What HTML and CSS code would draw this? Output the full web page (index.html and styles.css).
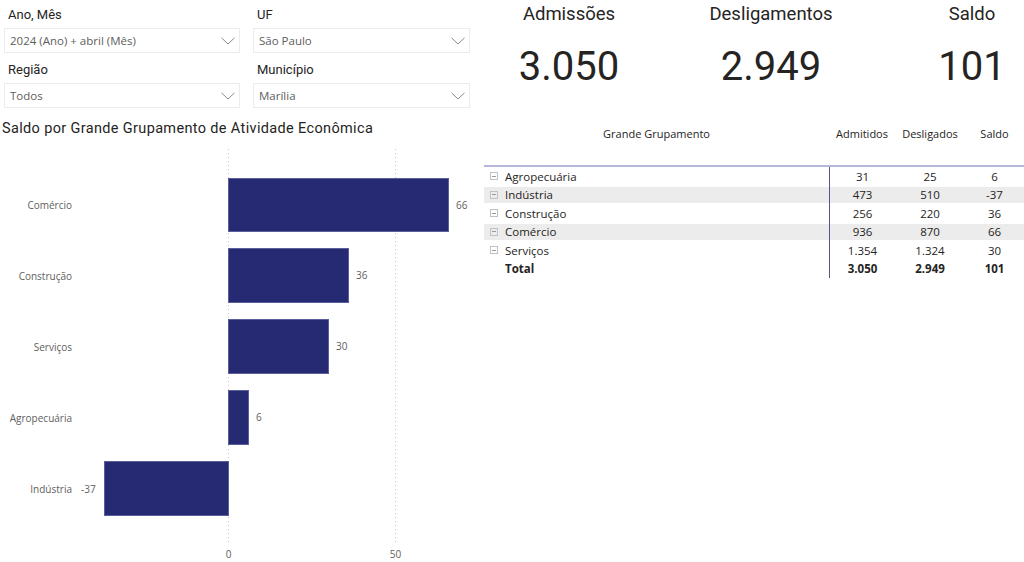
FILE: index.html
```html
<!DOCTYPE html>
<html lang="pt-BR">
<head>
<meta charset="utf-8">
<title>Saldo CAGED</title>
<link rel="stylesheet" href="styles.css">
</head>
<body>
<div class="page">
  <section class="left">
    <div class="filters">
      <div class="filter">
        <div class="flabel">Ano, Mês</div>
        <div class="dropdown"><span>2024 (Ano) + abril (Mês)</span>
          <svg class="chev" width="14" height="8" viewBox="0 0 14 8"><path d="M0.5 0.8 L7 7 L13.5 0.8" fill="none" stroke="#8a8a8a" stroke-width="1"/></svg></div>
      </div>
      <div class="filter">
        <div class="flabel">UF</div>
        <div class="dropdown"><span>São Paulo</span>
          <svg class="chev" width="14" height="8" viewBox="0 0 14 8"><path d="M0.5 0.8 L7 7 L13.5 0.8" fill="none" stroke="#8a8a8a" stroke-width="1"/></svg></div>
      </div>
      <div class="filter">
        <div class="flabel">Região</div>
        <div class="dropdown"><span>Todos</span>
          <svg class="chev" width="14" height="8" viewBox="0 0 14 8"><path d="M0.5 0.8 L7 7 L13.5 0.8" fill="none" stroke="#8a8a8a" stroke-width="1"/></svg></div>
      </div>
      <div class="filter">
        <div class="flabel">Município</div>
        <div class="dropdown"><span>Marília</span>
          <svg class="chev" width="14" height="8" viewBox="0 0 14 8"><path d="M0.5 0.8 L7 7 L13.5 0.8" fill="none" stroke="#8a8a8a" stroke-width="1"/></svg></div>
      </div>
    </div>
    <h2 class="ctitle">Saldo por Grande Grupamento de Atividade Econômica</h2>
    <svg class="chart" width="480" height="430" viewBox="0 132 480 430">
      <g class="grid">
        <line x1="228.5" y1="150" x2="228.5" y2="545"/>
        <line x1="395.5" y1="150" x2="395.5" y2="545"/>
      </g>
      <g class="bars">
        <rect x="228.5" y="179.5" width="220" height="53"/>
        <rect x="228.5" y="249.5" width="120" height="54"/>
        <rect x="228.5" y="320.5" width="100" height="54"/>
        <rect x="228.5" y="391.5" width="20" height="54"/>
        <rect x="104.5" y="462.5" width="124" height="54"/>
      </g>
      <g class="cat">
        <text x="72" y="210">Comércio</text>
        <text x="72" y="281">Construção</text>
        <text x="72" y="352">Serviços</text>
        <text x="72" y="423">Agropecuária</text>
        <text x="72" y="494">Indústria</text>
      </g>
      <g class="val">
        <text x="456" y="210">66</text>
        <text x="356" y="280">36</text>
        <text x="336" y="351">30</text>
        <text x="256" y="422">6</text>
        <text x="81" y="494">-37</text>
      </g>
      <g class="axis">
        <text x="228.5" y="559">0</text>
        <text x="395.5" y="559">50</text>
      </g>
    </svg>
  </section>
  <section class="right">
    <div class="kpis">
      <div class="kpi k1"><div class="klabel">Admissões</div><div class="kval">3.050</div></div>
      <div class="kpi k2"><div class="klabel">Desligamentos</div><div class="kval">2.949</div></div>
      <div class="kpi k3"><div class="klabel">Saldo</div><div class="kval">101</div></div>
    </div>
    <div class="table">
      <div class="thead">
        <div class="c-name">Grande Grupamento</div>
        <div class="c-num c-a">Admitidos</div>
        <div class="c-num c-d">Desligados</div>
        <div class="c-num c-s">Saldo</div>
      </div>
      <div class="tbody">
        <div class="row"><div class="c-name"><span class="exp"></span>Agropecuária</div><div class="c-num c-a">31</div><div class="c-num c-d">25</div><div class="c-num c-s">6</div></div>
        <div class="row alt"><div class="c-name"><span class="exp"></span>Indústria</div><div class="c-num c-a">473</div><div class="c-num c-d">510</div><div class="c-num c-s">-37</div></div>
        <div class="row"><div class="c-name"><span class="exp"></span>Construção</div><div class="c-num c-a">256</div><div class="c-num c-d">220</div><div class="c-num c-s">36</div></div>
        <div class="row alt"><div class="c-name"><span class="exp"></span>Comércio</div><div class="c-num c-a">936</div><div class="c-num c-d">870</div><div class="c-num c-s">66</div></div>
        <div class="row"><div class="c-name"><span class="exp"></span>Serviços</div><div class="c-num c-a">1.354</div><div class="c-num c-d">1.324</div><div class="c-num c-s">30</div></div>
        <div class="row total"><div class="c-name"><span class="noexp"></span>Total</div><div class="c-num c-a">3.050</div><div class="c-num c-d">2.949</div><div class="c-num c-s">101</div></div>
      </div>
    </div>
  </section>
</div>
</body>
</html>
```

FILE: styles.css
```css
* { box-sizing: border-box; }
html, body { margin: 0; padding: 0; background: #ffffff; }
body {
  width: 1024px;
  height: 562px;
  overflow: hidden;
  font-family: "Open Sans", "Noto Sans", sans-serif;
  color: #252423;
}
.page {
  display: grid;
  grid-template-columns: 484px 540px;
  height: 562px;
}
.left { display: flex; flex-direction: column; }
.filters {
  display: grid;
  grid-template-columns: 236px 217px;
  column-gap: 13px;
  row-gap: 8px;
  padding: 6px 0 0 4px;
}
.flabel {
  font-family: Roboto, "DejaVu Sans", sans-serif;
  font-size: 13px;
  line-height: 18px;
  height: 18px;
  padding-left: 4px;
  color: #252423;
}
.dropdown {
  margin-top: 4px;
  height: 25px;
  border: 1px solid #ececec;
  display: flex;
  align-items: center;
  justify-content: space-between;
  padding: 0 4px 0 5px;
  font-size: 11.5px;
  color: #605e5c;
}
.chev { display: block; margin-top: 1px; }
.ctitle {
  margin: 12px 0 0 2px;
  font-family: Roboto, "DejaVu Sans", sans-serif;
  font-weight: 400;
  font-size: 14.5px;
  letter-spacing: 0.35px;
  line-height: 18px;
  color: #252423;
}
.chart { display: block; margin-top: -7px; }
.grid line { stroke: #c8c8c8; stroke-width: 1; stroke-dasharray: 1 3; }
.bars rect { fill: #262a73; stroke: #5a5e9c; stroke-width: 1; }
.cat text { font-size: 10px; fill: #605e5c; text-anchor: end; font-family: "Open Sans", sans-serif; }
.val text { font-size: 10px; fill: #605e5c; font-family: "Open Sans", sans-serif; }
.axis text { font-size: 10px; fill: #605e5c; text-anchor: middle; font-family: "Open Sans", sans-serif; }

.kpis {
  display: grid;
  grid-template-columns: 170px 234px 136px;
}
.k3 { padding-left: 32px; }
.kpi { text-align: center; font-family: Roboto, "DejaVu Sans", sans-serif; color: #252423; }
.klabel { font-size: 18.5px; line-height: 22px; margin-top: 3px; }
.kval { font-size: 40px; line-height: 48px; margin-top: 18px; }

.table { margin-top: 26px; }
.thead {
  display: grid;
  grid-template-columns: 345px 66px 70px 59px;
  font-size: 11px;
  color: #252423;
  height: 50px;
  padding-top: 9px;
  line-height: 16px;
  border-bottom: 2px solid #b6b6d8;
}
.thead .c-num { text-align: center; }
.thead .c-name { text-align: center; }
.tbody { display: flex; flex-direction: column; }
.row {
  display: grid;
  grid-template-columns: 345px 66px 70px 59px;
  height: 18.5px;
  padding: 1.5px 0;
  background-clip: content-box;
  font-size: 11.5px;
  line-height: 15.5px;
  color: #252423;
}
.row.alt { background-color: #ececec; }
.row .c-name { display: flex; align-items: center; padding-left: 6px; }
.row .c-num { text-align: center; }
.row .c-a {
  border-left: 1px solid #55558c;
  margin-top: -1.5px;
  margin-bottom: -1.5px;
  padding-top: 1.5px;
}
.exp {
  width: 8px; height: 8px;
  border: 1px solid #c2c2c2;
  margin-right: 7px;
  position: relative;
  flex: none;
}
.exp::after {
  content: "";
  position: absolute;
  left: 1px; right: 1px; top: 2.5px;
  height: 1px;
  background: #9a9a9a;
}
.noexp { width: 8px; margin-right: 7px; flex: none; }
.row.total { font-weight: 700; }
```
